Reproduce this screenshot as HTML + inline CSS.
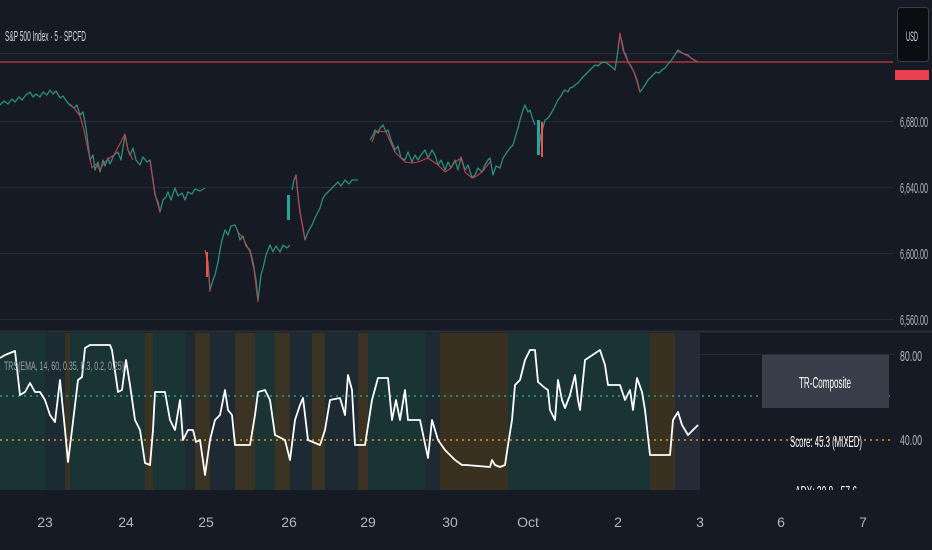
<!DOCTYPE html>
<html><head><meta charset="utf-8"><style>
html,body{margin:0;padding:0;background:#161a25;width:932px;height:550px;overflow:hidden}
svg{display:block}
text{font-family:"Liberation Sans",sans-serif}
</style></head><body>
<svg width="932" height="550" viewBox="0 0 932 550" xmlns="http://www.w3.org/2000/svg">
<rect width="932" height="550" fill="#161a25"/>
<g stroke="#262b36" stroke-width="1">
<line x1="0" y1="53.5" x2="893" y2="53.5"/>
<line x1="0" y1="121.5" x2="893" y2="121.5"/>
<line x1="0" y1="187.5" x2="893" y2="187.5"/>
<line x1="0" y1="253.5" x2="893" y2="253.5"/>
<line x1="0" y1="319.5" x2="893" y2="319.5"/>
<line x1="0" y1="354.5" x2="893" y2="354.5"/>
</g>
<line x1="0" y1="331.5" x2="932" y2="331.5" stroke="#2a2e39" stroke-width="2"/>
<line x1="0" y1="62" x2="893" y2="62" stroke="#a8343c" stroke-width="1.5"/>
<g>
<rect x="0" y="333" width="700" height="157" fill="#1a3436"/>
<rect x="45" y="333" width="20" height="157" fill="#1c2a33"/>
<rect x="65" y="333" width="5" height="157" fill="#3a3222"/>
<rect x="145" y="333" width="8" height="157" fill="#3a3222"/>
<rect x="185" y="333" width="10" height="157" fill="#1e2a33"/>
<rect x="195" y="333" width="15" height="157" fill="#3a3222"/>
<rect x="210" y="333" width="25" height="157" fill="#1e2a33"/>
<rect x="235" y="333" width="20" height="157" fill="#3a3222"/>
<rect x="275" y="333" width="15" height="157" fill="#3a3222"/>
<rect x="290" y="333" width="22" height="157" fill="#1e2a33"/>
<rect x="312" y="333" width="13" height="157" fill="#3a3222"/>
<rect x="325" y="333" width="33" height="157" fill="#1e2a33"/>
<rect x="358" y="333" width="10" height="157" fill="#3a3222"/>
<rect x="425" y="333" width="15" height="157" fill="#1e2a33"/>
<rect x="440" y="333" width="68" height="157" fill="#3a3020"/>
<rect x="650" y="333" width="25" height="157" fill="#3a3020"/>
<rect x="675" y="333" width="25" height="157" fill="#242a36"/>
</g>
<line x1="0" y1="396" x2="893" y2="396" stroke="#1fa389" stroke-width="1.6" stroke-dasharray="2,4"/>
<line x1="0" y1="440" x2="893" y2="440" stroke="#e09b17" stroke-width="1.6" stroke-dasharray="2,4"/>
<g fill="none" stroke-width="1.3" stroke-linejoin="round">
<polyline stroke="#2b8f7d" points="0,105 4,101 8,104 12,99 15,102 19,97 22,100 26,95 30,92 33,97 36,94 40,97 43,92 47,95 50,90 53,94 56,91 60,98 63,96 67,102 70,105 74,108 77,105 80,115 83,112 86,128 90,160 93,155 95,170 98,162 100,172 103,160 105,166 108,158 110,164 114,155 118,152 121,160 125,135 128,150 130,155 133,148 136,160 140,165 143,157 147,162 150,160 153,180 155,195 158,202 160,212 163,200 166,197 168,192 171,200 175,188 178,196 182,193 185,200 188,192 192,194 195,189 200,191 205,188"/>
<polyline stroke="#2b8f7d" points="205,250 208,262 210,290 213,280 215,275 218,262 220,250 222,240 225,230 228,235 231,226 235,225 238,232 240,240 243,236 246,246 250,250 253,262 256,280 258,300 261,275 263,268 266,255 268,250 270,245 273,252 276,246 280,252 283,245 287,248 290,245"/>
<polyline stroke="#2b8f7d" points="292,190 294,180 296,175 298,196 300,212 303,228 305,240 308,232 312,225 315,218 318,212 320,208 323,198 325,195 328,192 332,188 335,185 338,182 341,186 345,180 349,184 352,180 358,180"/>
<polyline stroke="#2b8f7d" points="370,140 373,135 375,130 378,133 380,128 383,125 386,132 388,130 391,140 395,150 398,146 401,158 405,160 408,152 412,162 415,155 418,160 421,155 425,150 428,158 432,150 435,155 438,165 441,160 445,170 448,162 451,168 455,160 458,170 461,157 465,170 468,165 472,178 475,175 478,168 482,172 485,165 488,160 490,158 493,175 496,166 500,168 503,158 507,152 510,148 513,145 515,138 518,128 520,120 523,110 525,105 528,112 530,110 533,120 535,125"/>
<polyline stroke="#2b8f7d" points="538,155 541,135 545,120 548,118 550,115 553,110 556,104 558,100 561,96 563,92 565,90 568,92 570,88 573,87 575,85 578,83 582,78 585,75 588,72 591,69 595,65 598,66 601,63 605,62 608,64 612,67 615,70 618,50 620,35 622,42 624,52 626,55 628,62 631,66 634,72 637,80 640,92 643,88 645,85 648,80 650,78 653,75 656,72 659,73 662,70 665,68 668,64 670,62 673,58 676,53 678,50 681,52 684,54 688,55 691,58 694,60 698,62"/>
<g stroke="#c2414c" stroke-width="1.1">
<polyline points="70,104 74,108 80,116 84,130 88,150 92,168 96,164 100,170 104,163 108,159 114,155 125,134 128,150 133,160"/>
<polyline points="150,160 153,182 156,198 160,212"/>
<polyline points="205,250 208,265 210,292"/>
<polyline points="238,232 243,238 250,252 254,270 258,302"/>
<polyline points="294,180 296,176 300,212 305,240"/>
<polyline points="372,142 376,131 386,132 395,152 401,158 405,162 412,163 418,162 428,158 438,165 445,172 451,168 455,162 461,158 465,172 472,178 475,177 482,172 490,162"/>
<polyline points="618,48 620,33 623,50 628,62 634,72 640,92"/>
<polyline points="676,52 680,52 688,56 698,62"/>
</g>
</g>
<rect x="287" y="195" width="3" height="25" fill="#26a69a"/>
<rect x="537" y="120" width="3" height="35" fill="#26a69a"/>
<rect x="541" y="122" width="2" height="35" fill="#ef5350"/>
<rect x="206" y="252" width="2" height="25" fill="#ef5350"/>
<polyline fill="none" stroke="#ffffff" stroke-width="1.8" stroke-linejoin="round" points="0,358 5,355 15,351 20,395 25,392 30,383 35,392 40,392 45,400 50,415 55,422 60,380 65,430 68,462 72,430 78,380 82,377 85,348 90,345 110,345 112,350 118,392 122,390 126,360 130,385 135,420 140,430 145,463 150,465 153,430 155,392 165,392 170,420 175,430 180,400 183,440 188,430 193,430 196,442 200,440 205,475 210,440 215,420 220,415 225,390 228,410 232,415 235,445 250,445 255,415 258,392 265,390 270,400 275,435 285,440 290,460 295,420 300,405 303,398 308,440 320,445 325,430 330,400 340,398 345,415 348,375 352,390 355,445 365,445 372,400 378,378 388,378 392,420 396,400 400,420 405,390 408,420 420,420 428,458 432,420 438,440 445,450 455,460 462,465 466,465 490,467 492,460 495,465 500,467 505,465 508,445 512,420 515,385 520,380 525,360 530,350 535,350 538,382 545,388 548,390 550,410 555,420 558,380 562,400 565,408 570,395 575,375 578,400 580,410 585,360 600,350 605,365 608,385 615,385 620,385 625,400 630,390 633,410 637,378 642,392 645,410 650,455 670,455 673,420 678,412 682,425 688,435 698,425"/>
<text x="4" y="370" font-size="12" fill="#9aa0aa" textLength="120" lengthAdjust="spacingAndGlyphs">TRS(EMA, 14, 60, 0.35, 0.3, 0.2, 0.25)</text>
<rect x="762" y="355" width="127" height="53" fill="#3a3e4a"/>
<text x="825" y="388" font-size="16" fill="#ffffff" text-anchor="middle" textLength="52" lengthAdjust="spacingAndGlyphs">TR-Composite</text>
<text x="826" y="447" font-size="16" fill="#ffffff" text-anchor="middle" textLength="72" lengthAdjust="spacingAndGlyphs">Score: 45.3  (MIXED)</text>
<svg x="780" y="475" width="90" height="15"><text x="46" y="22" font-size="16" fill="#ffffff" text-anchor="middle" textLength="62" lengthAdjust="spacingAndGlyphs">ADX: 30.8 · 57.6</text></svg>
<rect x="0" y="490" width="932" height="60" fill="#161a25"/>
<g font-size="15" fill="#b2b5be">
<text x="900" y="127" textLength="28" lengthAdjust="spacingAndGlyphs">6,680.00</text>
<text x="900" y="193" textLength="28" lengthAdjust="spacingAndGlyphs">6,640.00</text>
<text x="900" y="259" textLength="28" lengthAdjust="spacingAndGlyphs">6,600.00</text>
<text x="900" y="325" textLength="28" lengthAdjust="spacingAndGlyphs">6,560.00</text>
<text x="900" y="361" textLength="22" lengthAdjust="spacingAndGlyphs">80.00</text>
<text x="900" y="445" textLength="22" lengthAdjust="spacingAndGlyphs">40.00</text>
</g>
<g font-size="14" fill="#b2b5be" text-anchor="middle">
<text x="45" y="527">23</text><text x="126" y="527">24</text><text x="206" y="527">25</text>
<text x="289" y="527">26</text><text x="368" y="527">29</text><text x="450" y="527">30</text>
<text x="528" y="527">Oct</text><text x="618" y="527">2</text><text x="700" y="527">3</text>
<text x="781" y="527">6</text><text x="863" y="527">7</text>
</g>
<text x="5" y="41" font-size="15" fill="#d1d4dc" textLength="81" lengthAdjust="spacingAndGlyphs">S&amp;P 500 Index · 5 · SPCFD</text>
<rect x="897.5" y="7.5" width="31" height="54" rx="3" fill="#0c0d10" stroke="#3a3e48"/>
<text x="906" y="41" font-size="14" fill="#d1d4dc" textLength="12" lengthAdjust="spacingAndGlyphs">USD</text>
<rect x="895" y="70" width="34" height="10" fill="#e8404f"/>
</svg>
</body></html>
